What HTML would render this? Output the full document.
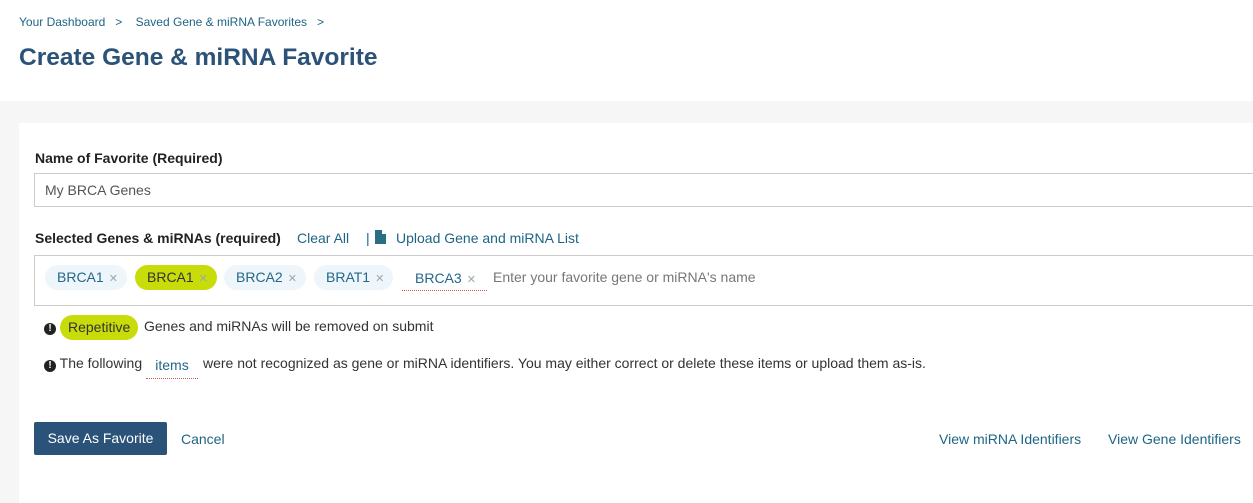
<!DOCTYPE html>
<html><head><meta charset="utf-8"><style>
body{margin:0;width:1253px;height:498px;overflow:hidden;background:#f6f6f6;font-family:"Liberation Sans",Arial,sans-serif;position:relative}
.a{position:absolute;white-space:nowrap}
.top{position:absolute;left:0;top:0;width:1253px;height:101px;background:#fff}
.card{position:absolute;left:19px;top:123px;width:1240px;height:380px;background:#fff}
.link{color:#1e6585}
.chip{position:absolute;top:265px;height:25px;line-height:25px;border-radius:13px;background:#eef5fb;color:#24678a;font-size:14px;padding:0 0 0 12px}
.chip i{font-style:normal;color:#9aa;font-size:11px;margin-left:5px;padding-right:9px}
.g{background:#c8dc0a;color:#333}
.bang{display:inline-block;width:12px;height:12px;border-radius:50%;background:#222;color:#fff;font-size:10px;font-weight:bold;text-align:center;line-height:12px;vertical-align:0px}
</style></head><body>
<div class="top"></div>
<div class="a link" style="left:19px;top:15px;font-size:12px">Your Dashboard &nbsp;&nbsp;&gt;&nbsp;&nbsp;&nbsp; Saved Gene &amp; miRNA Favorites &nbsp;&nbsp;&gt;</div>
<div class="a" style="left:19px;top:44px;font-size:24.5px;font-weight:bold;color:#2b5278">Create Gene &amp; miRNA Favorite</div>
<div class="card"></div>
<div class="a" style="left:35px;top:150px;font-size:14px;font-weight:bold;color:#222">Name of Favorite (Required)</div>
<div class="a" style="left:34px;top:173px;width:1230px;height:34px;border:1px solid #ccc;box-sizing:border-box"></div>
<div class="a" style="left:45px;top:182px;font-size:14px;color:#555">My BRCA Genes</div>
<div class="a" style="left:35px;top:230px;font-size:14px;font-weight:bold;color:#222">Selected Genes &amp; miRNAs (required)</div>
<div class="a link" style="left:297px;top:230px;font-size:14px">Clear All</div>
<div class="a link" style="left:366px;top:230px;font-size:14px">|</div>
<svg class="a" style="left:375px;top:230px" width="11" height="14"><path d="M0 0H7L11 4V14H0Z" fill="#2a6e86"/><path d="M7 0V4H11" fill="#fff"/></svg>
<div class="a link" style="left:396px;top:230px;font-size:14px">Upload Gene and miRNA List</div>
<div class="a" style="left:34px;top:255px;width:1230px;height:51px;border:1px solid #ccc;box-sizing:border-box"></div>
<div class="chip" style="left:45px">BRCA1<i>✕</i></div>
<div class="chip g" style="left:135px">BRCA1<i>✕</i></div>
<div class="chip" style="left:224px">BRCA2<i>✕</i></div>
<div class="chip" style="left:314px">BRAT1<i>✕</i></div>
<div class="a" style="left:402px;top:264px;width:85px;height:27px;border-bottom:1px dotted #c55;font-size:14px;color:#24678a;line-height:28px;padding-left:13px;box-sizing:border-box">BRCA3<span style="color:#9aa;font-size:11px;margin-left:5px">✕</span></div>
<div class="a" style="left:493px;top:269px;font-size:14px;color:#777">Enter your favorite gene or miRNA's name</div>
<div class="a" style="left:44px;top:318px;font-size:14px;color:#333"><span class="bang">!</span></div>
<div class="a g" style="left:60px;top:315px;height:25px;line-height:25px;border-radius:13px;padding:0 8px;font-size:14px">Repetitive</div>
<div class="a" style="left:144px;top:318px;font-size:14px;color:#333">Genes and miRNAs will be removed on submit</div>
<div class="a" style="left:44px;top:355px;font-size:14px;color:#333"><span class="bang">!</span> The following</div>
<div class="a" style="left:146px;top:352px;width:52px;height:26px;border-bottom:1px dotted #c55;font-size:14px;color:#24678a;line-height:26px;text-align:center">items</div>
<div class="a" style="left:203px;top:355px;font-size:14px;color:#333">were not recognized as gene or miRNA identifiers. You may either correct or delete these items or upload them as-is.</div>
<div class="a" style="left:34px;top:422px;width:133px;height:33px;background:#2b5278;border-radius:2px;color:#fff;font-size:14px;line-height:33px;text-align:center">Save As Favorite</div>
<div class="a link" style="left:181px;top:431px;font-size:14px">Cancel</div>
<div class="a link" style="left:939px;top:431px;font-size:14px">View miRNA Identifiers</div>
<div class="a link" style="left:1108px;top:431px;font-size:14px">View Gene Identifiers</div>
</body></html>
